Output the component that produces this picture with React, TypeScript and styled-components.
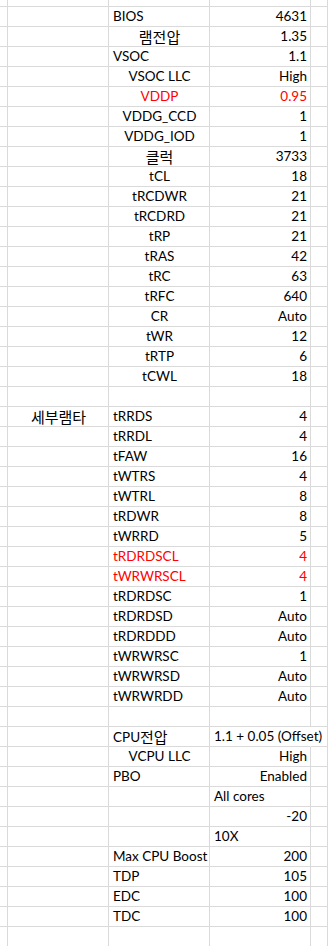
import React from 'react';
import styled, { createGlobalStyle } from 'styled-components';

type Align = 'left' | 'center' | 'right';

type Row = {
  group?: string;
  label?: string;
  labelAlign?: Align;
  value?: string;
  valueAlign?: Align;
  red?: boolean;
  overflow?: boolean;
};

const rows: Row[] = [
  { label: 'BIOS', value: '4631' },
  { label: '램전압', labelAlign: 'center', value: '1.35' },
  { label: 'VSOC', value: '1.1' },
  { label: 'VSOC LLC', labelAlign: 'center', value: 'High' },
  { label: 'VDDP', labelAlign: 'center', value: '0.95', red: true },
  { label: 'VDDG_CCD', labelAlign: 'center', value: '1' },
  { label: 'VDDG_IOD', labelAlign: 'center', value: '1' },
  { label: '클럭', labelAlign: 'center', value: '3733' },
  { label: 'tCL', labelAlign: 'center', value: '18' },
  { label: 'tRCDWR', labelAlign: 'center', value: '21' },
  { label: 'tRCDRD', labelAlign: 'center', value: '21' },
  { label: 'tRP', labelAlign: 'center', value: '21' },
  { label: 'tRAS', labelAlign: 'center', value: '42' },
  { label: 'tRC', labelAlign: 'center', value: '63' },
  { label: 'tRFC', labelAlign: 'center', value: '640' },
  { label: 'CR', labelAlign: 'center', value: 'Auto' },
  { label: 'tWR', labelAlign: 'center', value: '12' },
  { label: 'tRTP', labelAlign: 'center', value: '6' },
  { label: 'tCWL', labelAlign: 'center', value: '18' },
  {},
  { group: '세부램타', label: 'tRRDS', value: '4' },
  { label: 'tRRDL', value: '4' },
  { label: 'tFAW', value: '16' },
  { label: 'tWTRS', value: '4' },
  { label: 'tWTRL', value: '8' },
  { label: 'tRDWR', value: '8' },
  { label: 'tWRRD', value: '5' },
  { label: 'tRDRDSCL', value: '4', red: true },
  { label: 'tWRWRSCL', value: '4', red: true },
  { label: 'tRDRDSC', value: '1' },
  { label: 'tRDRDSD', value: 'Auto' },
  { label: 'tRDRDDD', value: 'Auto' },
  { label: 'tWRWRSC', value: '1' },
  { label: 'tWRWRSD', value: 'Auto' },
  { label: 'tWRWRDD', value: 'Auto' },
  {},
  { label: 'CPU전압', value: '1.1 + 0.05 (Offset)', valueAlign: 'left', overflow: true },
  { label: 'VCPU LLC', labelAlign: 'center', value: 'High' },
  { label: 'PBO', value: 'Enabled' },
  { value: 'All cores', valueAlign: 'left' },
  { value: '-20' },
  { value: '10X', valueAlign: 'left' },
  { label: 'Max CPU Boost', value: '200' },
  { label: 'TDP', value: '105' },
  { label: 'EDC', value: '100' },
  { label: 'TDC', value: '100' },
];

const GlobalStyle = createGlobalStyle`
  html, body {
    margin: 0;
    padding: 0;
    background: #ffffff;
  }
  body {
    font-family: Lato, "Noto Sans CJK KR", sans-serif;
    color: #000000;
  }
`;

const Sheet = styled.div`
  display: grid;
  grid-template-columns: 8px 101px 101px 101px 1fr;
  grid-template-rows: 7px repeat(${rows.length + 1}, 20px);
  width: 328px;
  height: 946px;
  overflow: hidden;
`;

const Cell = styled.div<{ $align?: Align; $red?: boolean; $overflow?: boolean }>`
  box-sizing: border-box;
  border-right: 1px solid ${(p) => (p.$overflow ? 'transparent' : '#dadada')};
  border-bottom: 1px solid #dadada;
  padding: 0 3px 0 4px;
  font-size: 13.5px;
  line-height: 19px;
  white-space: nowrap;
  overflow: ${(p) => (p.$overflow ? 'visible' : 'hidden')};
  text-align: ${(p) => p.$align || 'left'};
  color: ${(p) => (p.$red ? '#ff0000' : '#000000')};
  position: relative;
  z-index: ${(p) => (p.$overflow ? 1 : 0)};
`;

const Ko = styled.span`
  font-family: "Noto Sans CJK KR", sans-serif;
  font-size: 15px;
  vertical-align: -1px;
`;

function SheetText({ text }: { text?: string }) {
  if (!text) return null;
  const parts = text.split(/([\uAC00-\uD7A3]+)/);
  return (
    <>
      {parts.map((part, i) =>
        i % 2 === 1 ? <Ko key={i}>{part}</Ko> : <React.Fragment key={i}>{part}</React.Fragment>,
      )}
    </>
  );
}

function App() {
  return (
    <>
      <GlobalStyle />
      <Sheet>
        {[0, 1, 2, 3, 4].map((c) => (
          <Cell key={`top-${c}`} />
        ))}
        {rows.map((row, r) => (
          <React.Fragment key={r}>
            <Cell />
            <Cell $align="center">
              <SheetText text={row.group} />
            </Cell>
            <Cell $align={row.labelAlign || 'left'} $red={row.red}>
              <SheetText text={row.label} />
            </Cell>
            <Cell $align={row.valueAlign || 'right'} $red={row.red} $overflow={row.overflow}>
              <SheetText text={row.value} />
            </Cell>
            <Cell />
          </React.Fragment>
        ))}
        {[0, 1, 2, 3, 4].map((c) => (
          <Cell key={`end-${c}`} />
        ))}
      </Sheet>
    </>
  );
}

export default App;
